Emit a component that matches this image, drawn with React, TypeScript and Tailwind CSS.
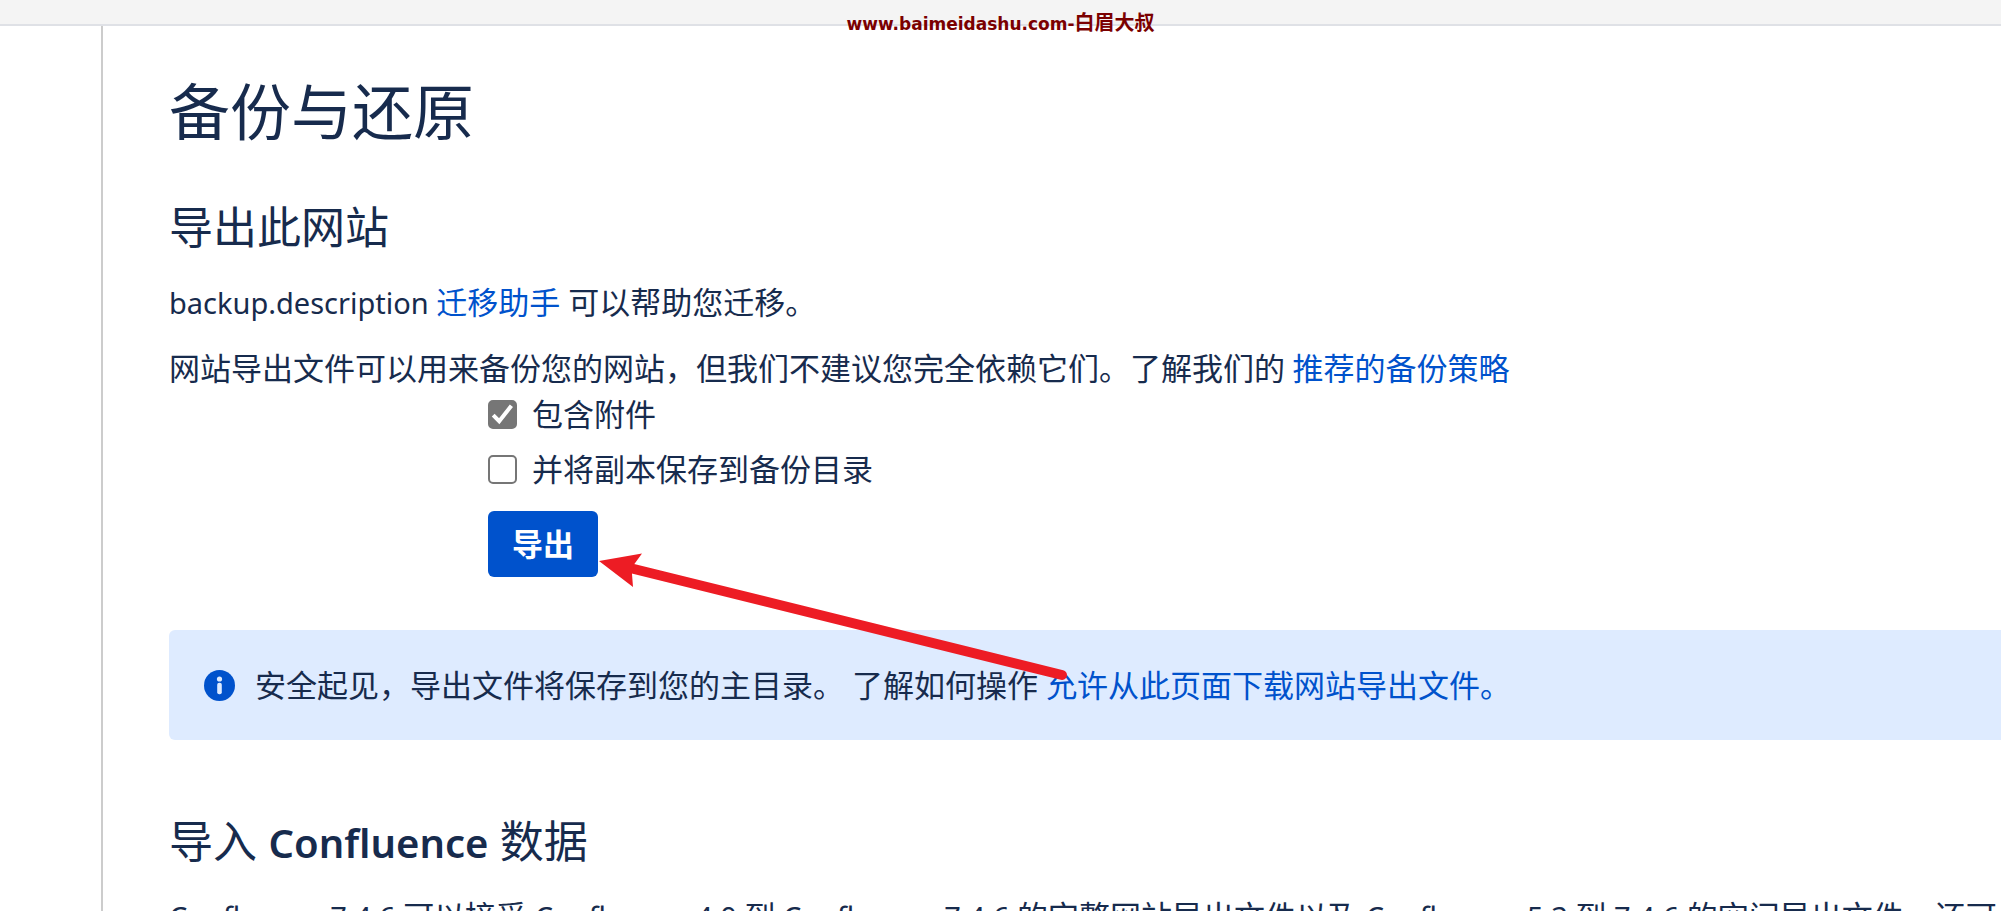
import type { ReactNode } from 'react';
import { useState } from 'react';

function TextLink({ children }: { children: ReactNode }) {
  return (
    <a href="#" className="text-[#0052cc] hover:underline">
      {children}
    </a>
  );
}

function Latin({ children }: { children: ReactNode }) {
  return <span className="text-[29px] leading-none">{children}</span>;
}

function SectionTitle({ children }: { children: ReactNode }) {
  return <h2 className="text-[44px] leading-[54px]">{children}</h2>;
}

function ExportOption({ id, label, initial }: { id: string; label: string; initial: boolean }) {
  const [checked, setChecked] = useState(initial);
  return (
    <div className="flex items-center gap-[15px]">
      <span className="grid size-[29px] shrink-0">
        <input
          id={id}
          type="checkbox"
          checked={checked}
          onChange={(event) => setChecked(event.target.checked)}
          className="col-start-1 row-start-1 size-[29px] appearance-none rounded-[5px] border-2 border-[#767676] bg-white checked:bg-[#767676]"
        />
        {checked && (
          <svg viewBox="0 0 29 29" className="pointer-events-none col-start-1 row-start-1 size-[29px]" aria-hidden="true">
            <path d="M5.2 15.2 11.2 21.2 23.4 5.8" fill="none" stroke="#fff" strokeWidth="4" />
          </svg>
        )}
      </span>
      <label htmlFor={id}>{label}</label>
    </div>
  );
}

function InfoIcon() {
  return (
    <svg viewBox="0 0 31 31" className="size-[31px] shrink-0" aria-hidden="true">
      <circle cx="15.5" cy="15.5" r="15.5" fill="#0052cc" />
      <circle cx="15.5" cy="9" r="2.6" fill="#deebff" />
      <rect x="13.2" y="12.800" width="4.600" height="11.400" rx="2" fill="#deebff" />
    </svg>
  );
}

function Arrow() {
  return (
    <svg viewBox="0 0 472 128" className="pointer-events-none absolute top-[42px] left-[110px] h-[128px] w-[472px]" aria-hidden="true">
      <path d="M36 16 464 122" stroke="#ed1c24" strokeWidth="10" strokeLinecap="round" />
      <path d="M1 8 44 0.500 36 11.500 34 21 35 34Z" fill="#ed1c24" />
    </svg>
  );
}

export default function App() {
  return (
    <div className="relative flex h-screen flex-col overflow-hidden bg-white font-['Noto_Sans','Noto_Sans_CJK_SC',sans-serif] text-[31px] leading-[44px] text-[#172b4d]">
      <header className="h-[26px] shrink-0 border-b-2 border-[#dfe1e6] bg-[#f4f4f4]" />
      <div className="absolute inset-x-0 top-[10px] text-center font-['DejaVu_Sans','Noto_Sans_CJK_SC',sans-serif] text-[17px] leading-[26px] font-bold text-[#7b0000]">
        www.baimeidashu.com-<span className="text-[20px]">白眉大叔</span>
      </div>

      <div className="flex min-h-0 flex-1">
        <aside className="w-[103px] shrink-0 border-r-2 border-[#ccc]" />
        <main className="min-w-0 flex-1 pt-[51px] pl-[66px]">
          <h1 className="text-[61px] leading-[70px]">备份与还原</h1>

          <section className="mt-[53px]">
            <SectionTitle>导出此网站</SectionTitle>
            <p className="mt-[26px]">
              <Latin>backup.description </Latin>
              <TextLink>迁移助手</TextLink> 可以帮助您迁移。
            </p>
            <p className="mt-[22px]">
              网站导出文件可以用来备份您的网站，但我们不建议您完全依赖它们。了解我们的<Latin> </Latin>
              <TextLink>推荐的备份策略</TextLink>
            </p>
            <form className="pt-0.5 pl-[319px]" onSubmit={(event) => event.preventDefault()}>
              <div className="flex flex-col gap-[11px]">
                <ExportOption id="include-attachments" label="包含附件" initial={true} />
                <ExportOption id="save-copy" label="并将副本保存到备份目录" initial={false} />
              </div>
              <div className="relative mt-5">
                <button type="submit" className="h-[66px] w-[110px] rounded-md bg-[#0052cc] font-bold text-white">
                  导出
                </button>
                <Arrow />
              </div>
            </form>
            <div className="mt-[53px] flex h-[110px] items-center gap-5 rounded-l-md bg-[#deebff] pl-[35px]">
              <InfoIcon />
              <p>
                安全起见，导出文件将保存到您的主目录。 了解如何操作 <TextLink>允许从此页面下载网站导出文件。</TextLink>
              </p>
            </div>
          </section>

          <section className="mt-[74px]">
            <SectionTitle>
              导入 <span className="text-[40px] leading-none font-semibold">Confluence</span> 数据
            </SectionTitle>
            <p className="mt-[26px] overflow-hidden whitespace-nowrap">
              <Latin>Confluence 7.4.6 </Latin>可以接受<Latin> Confluence 4.0 </Latin>到<Latin> Confluence 7.4.6 </Latin>
              的完整网站导出文件以及<Latin> Confluence 5.3 </Latin>到<Latin> 7.4.6 </Latin>的空间导出文件。还可以
            </p>
          </section>
        </main>
      </div>
    </div>
  );
}
